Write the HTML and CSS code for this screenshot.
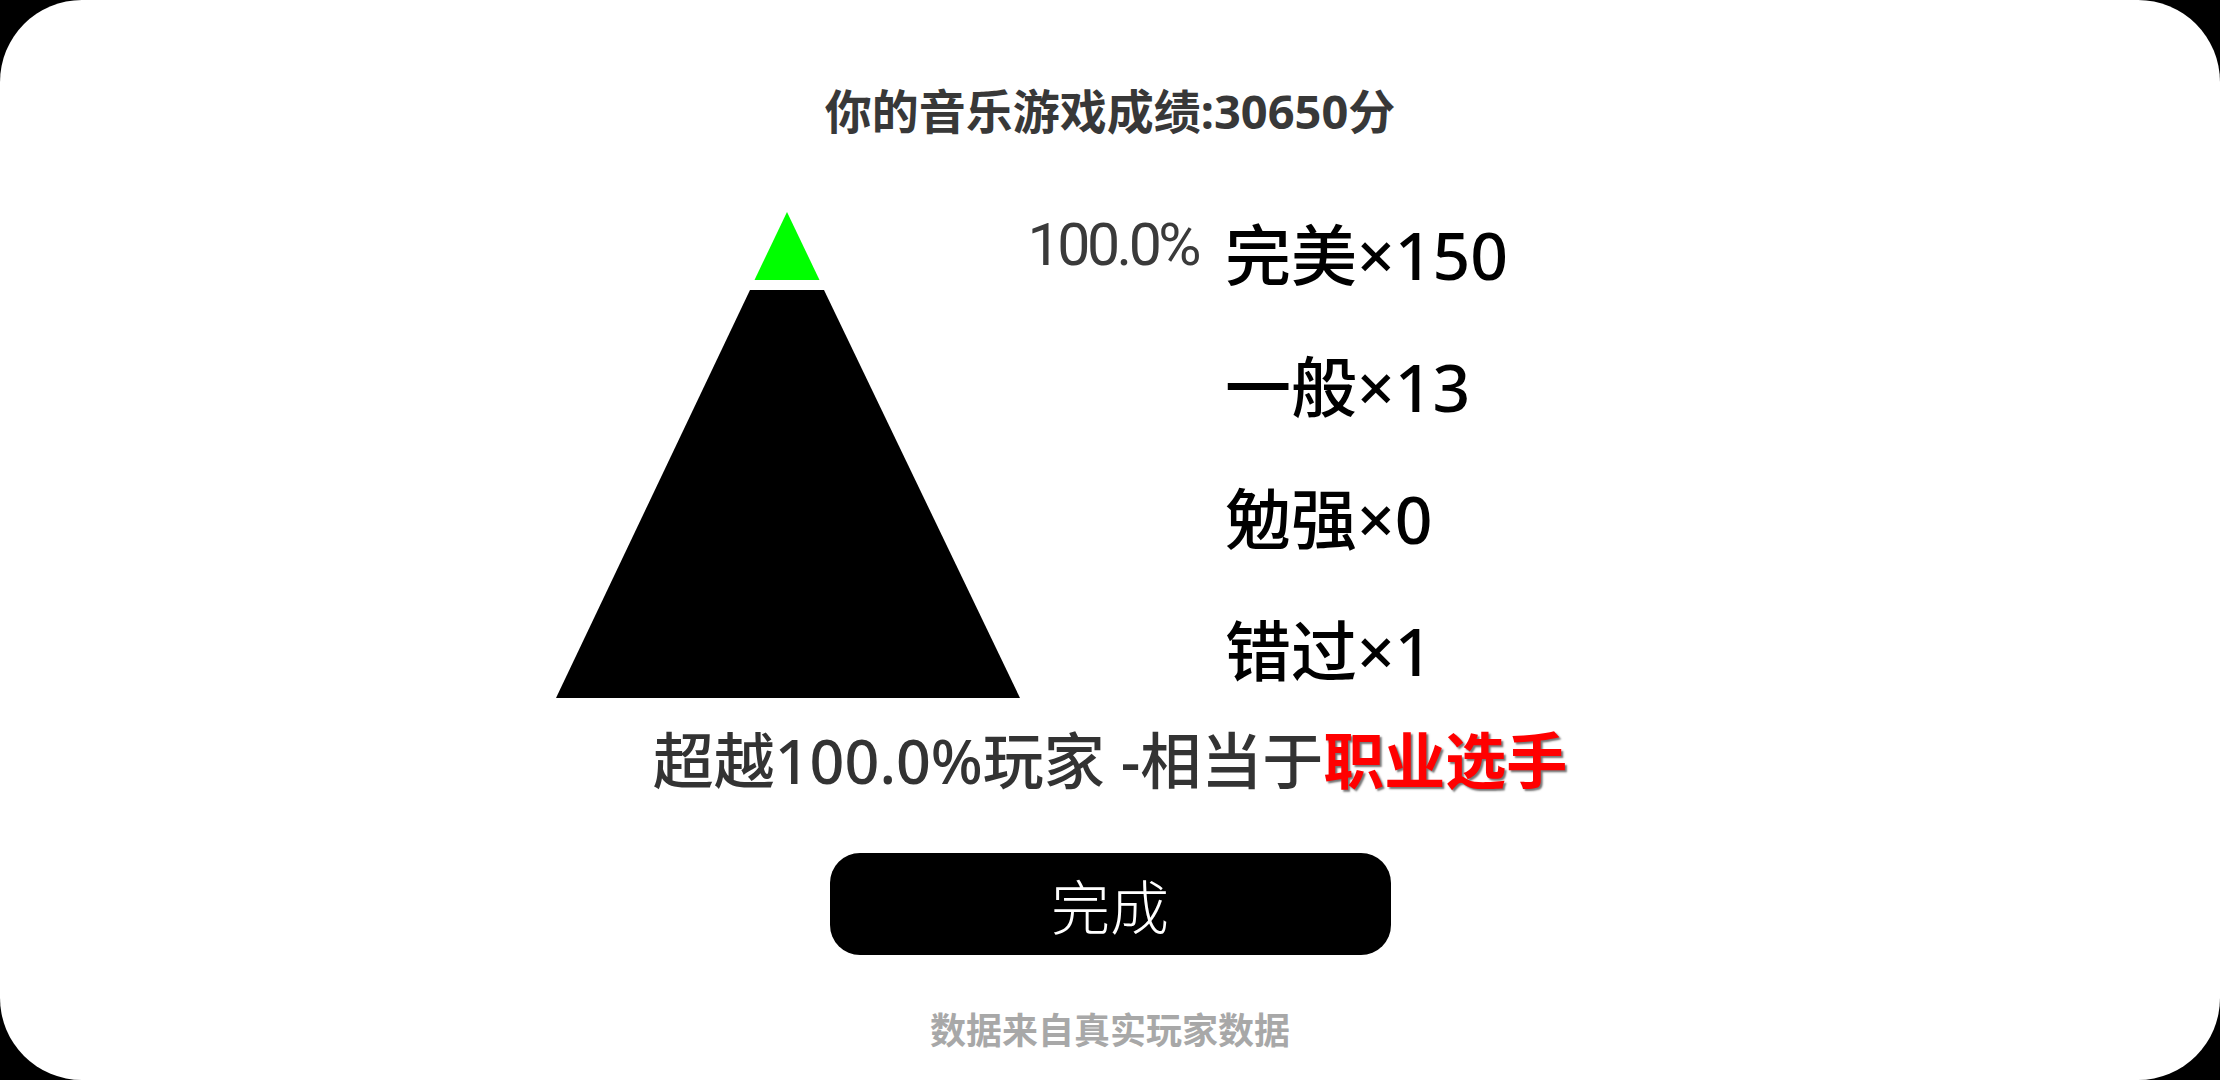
FILE: index.html
```html
<!DOCTYPE html>
<html lang="zh-CN">
<head>
<meta charset="utf-8">
<title>音乐游戏成绩</title>
<link rel="stylesheet" href="styles.css">
</head>
<body>
<div class="panel">
  <div class="title">你的音乐游戏成绩:30650分</div>
  <div class="main">
    <svg class="pyramid" width="464" height="486" viewBox="0 0 464 486">
      <polygon points="231,0 263.5,68 198.5,68" fill="#00ff00"/>
      <polygon points="194,78 268,78 464,486 0,486" fill="#000000"/>
    </svg>
    <div class="pct">100.0%</div>
    <div class="stats">
      <div class="stat">完美×150</div>
      <div class="stat">一般×13</div>
      <div class="stat">勉强×0</div>
      <div class="stat">错过×1</div>
    </div>
  </div>
  <div class="rank">超越100.0%玩家 -相当于<span class="level">职业选手</span></div>
  <div class="done">完成</div>
  <div class="note">数据来自真实玩家数据</div>
</div>
</body>
</html>
```
FILE: styles.css
```css
html, body {
  margin: 0;
  padding: 0;
  background: #000;
}
body {
  width: 2220px;
  height: 1080px;
  overflow: hidden;
  font-family: "Noto Sans", "Noto Sans CJK SC", sans-serif;
}
.panel {
  width: 2220px;
  height: 1080px;
  background: #fff;
  border-radius: 82px;
  display: flex;
  flex-direction: column;
  align-items: center;
  padding-top: 83px;
  box-sizing: border-box;
}
.title {
  font-size: 47px;
  line-height: 56px;
  font-weight: 700;
  color: #383838;
}
.main {
  align-self: stretch;
  display: flex;
  align-items: flex-start;
  padding-left: 556px;
  margin-top: 49px;
}
.pyramid {
  display: block;
  margin-top: 24px;
  flex: none;
}
.pct {
  width: 205px;
  box-sizing: border-box;
  padding-right: 27px;
  text-align: right;
  font-family: Roboto, "Noto Sans", sans-serif;
  font-weight: 400;
  font-size: 59px;
  letter-spacing: -3.5px;
  line-height: 114px;
  color: #3a3a3a;
  flex: none;
}
.stats {
  display: flex;
  flex-direction: column;
}
.stat {
  font-size: 66px;
  line-height: 132px;
  font-weight: 500;
  color: #000;
  white-space: nowrap;
}
.rank {
  margin-top: 5px;
  font-size: 61px;
  line-height: 80px;
  font-weight: 500;
  color: #333;
  white-space: nowrap;
}
.level {
  color: #ff0000;
  font-weight: 700;
  text-shadow: 2px 2px 2px rgba(0, 0, 0, 0.55);
}
.done {
  margin-top: 52px;
  width: 561px;
  height: 102px;
  border-radius: 30px;
  background: #000;
  color: #fff;
  font-size: 59px;
  font-weight: 300;
  display: flex;
  align-items: center;
  justify-content: center;
}
.note {
  margin-top: 51px;
  font-size: 36px;
  line-height: 50px;
  font-weight: 700;
  color: #a8a8a8;
}
```
